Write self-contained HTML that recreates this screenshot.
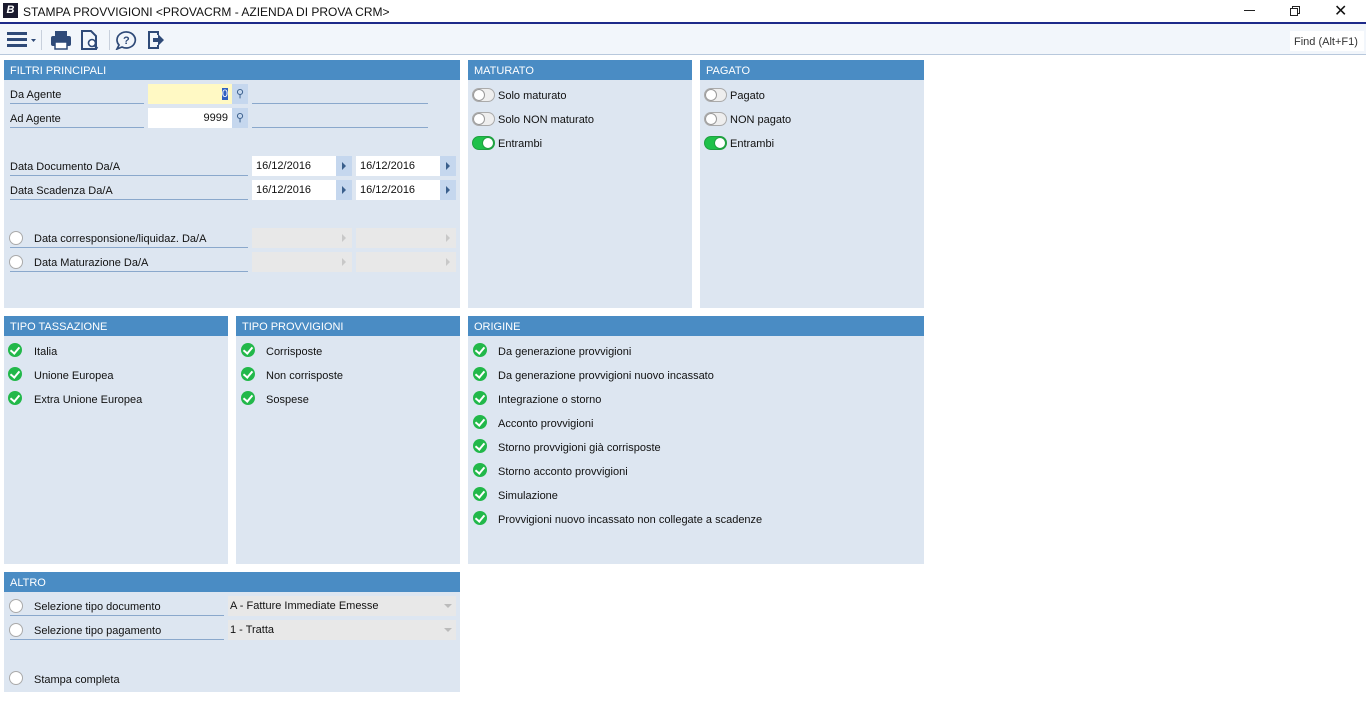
<!DOCTYPE html>
<html><head><meta charset="utf-8"><style>
*{margin:0;padding:0;box-sizing:border-box}
body{width:1366px;height:728px;background:#fff;font-family:"Liberation Sans",sans-serif;font-size:11px;color:#111;position:relative;overflow:hidden}
.a{position:absolute}
.p{position:absolute;background:#dde6f1}
.h{position:absolute;left:0;right:0;top:0;height:20px;background:#4a8cc4;color:#fff;font-size:11px;line-height:23px;padding-left:6px}
.lbl{position:absolute;border-bottom:1px solid #8aa8cc;height:20px;line-height:23px}
.in{position:absolute;background:#fff;height:20px;line-height:21px;padding-left:4px}
.btn{position:absolute;background:#c5d7ee;height:20px;width:16px}
.btn:after{content:"";position:absolute;left:6px;top:6px;border-left:4px solid #3a5f8c;border-top:4px solid transparent;border-bottom:4px solid transparent}
.dis{background:#e8e8e8}
.btn.dis:after{border-left-color:#c8c8c8}
.rad{position:absolute;width:14px;height:14px;border-radius:50%;background:#fff;border:1px solid #aaa}
.tg{position:absolute;width:23px;height:14px;border-radius:7px;background:#eee;border:1px solid #aaa}
.tg:after{content:"";position:absolute;left:0;top:0;width:12px;height:12px;border-radius:50%;background:#fff;border:1px solid #999;box-sizing:border-box}
.tg.on{background:#1fc14a;border-color:#1fa040}
.tg.on:after{left:9px;border-color:#1fa040}
.ck{position:absolute;width:14px;height:14px;border-radius:50%;background:#22b84a}
.ck:after{content:"";position:absolute;left:4px;top:2px;width:4px;height:7px;border:solid #fff;border-width:0 2px 2px 0;transform:rotate(40deg)}
.t{position:absolute;white-space:nowrap}
</style></head><body>
<div class="a" style="left:3px;top:3px;width:15px;height:15px;background:#1a1a2e;color:#fff;font-size:11px;font-style:italic;font-weight:bold;text-align:center;line-height:15px">B</div>
<div class="t" style="left:23px;top:5px;font-size:12px">STAMPA PROVVIGIONI &lt;PROVACRM - AZIENDA DI PROVA CRM&gt;</div>
<div class="a" style="left:1244px;top:10px;width:11px;height:1px;background:#222"></div>
<div class="a" style="left:1292px;top:6px;width:8px;height:8px;border:1px solid #222"></div>
<div class="a" style="left:1290px;top:8px;width:8px;height:8px;border:1px solid #222;background:#fff"></div>
<div class="t" style="left:1334px;top:1px;font-size:16px">✕</div>
<div class="a" style="left:0;top:22px;width:1366px;height:2px;background:#1d2a8a"></div>
<div class="a" style="left:0;top:24px;width:1366px;height:31px;background:#f2f6fb;border-bottom:1px solid #b8c8dc"></div>
<svg class="a" style="left:6px;top:30px" width="160" height="20">
<g fill="#2f4a78"><rect x="1" y="2" width="20" height="3"/><rect x="1" y="8" width="20" height="3"/><rect x="1" y="14" width="20" height="3"/><path d="M25 9h5l-2.5 3z"/></g>
<rect x="35" y="0" width="1" height="20" fill="#c8d0dc"/>
<g fill="#2f4a78"><rect x="49" y="1" width="12" height="5"/><rect x="45" y="6" width="20" height="10" rx="2"/><rect x="49" y="12" width="12" height="7" fill="#fff" stroke="#2f4a78" stroke-width="1.5"/></g>
<path d="M76 1h9l5 5v13h-14z" fill="none" stroke="#2f4a78" stroke-width="2"/>
<circle cx="86" cy="13" r="3.5" fill="#fff" stroke="#2f4a78" stroke-width="1.6"/><path d="M88.5 15.5l3 3" stroke="#2f4a78" stroke-width="2"/>
<rect x="103" y="0" width="1" height="20" fill="#c8d0dc"/>
<path d="M121 2a9 8 0 1 1-5 15l-5 2 2-4a9 8 0 0 1 8-13z" fill="none" stroke="#2f4a78" stroke-width="1.7"/>
<text x="117" y="14" font-size="11" font-weight="bold" fill="#2f4a78" font-family="Liberation Sans">?</text>
<path d="M152 5v-3h-9v16h9v-3" fill="none" stroke="#2f4a78" stroke-width="2"/><path d="M147 8h5v-4l6 6-6 6v-4h-5z" fill="#2f4a78"/>
</svg>
<div class="a" style="left:1290px;top:31px;width:74px;height:20px;background:#fff"></div>
<div class="t" style="left:1294px;top:36px;font-size:11px;color:#333">Find (Alt+F1)</div>

<div class="p" style="left:4px;top:60px;width:456px;height:248px"><div class="h">FILTRI PRINCIPALI</div></div>
<div class="lbl" style="left:10px;top:84px;width:134px">Da Agente</div>
<div class="in" style="left:148px;top:84px;width:84px;background:#fff9c4;text-align:right;padding-right:4px"><span style="background:#3060c0;color:#fff">0</span></div>
<div class="a" style="left:232px;top:84px;width:16px;height:20px;background:#c5d7ee;color:#3a5f8c;font-size:11px;text-align:center;line-height:20px">⚲</div>
<div class="a" style="left:252px;top:103px;width:176px;height:1px;background:#8aa8cc"></div>
<div class="lbl" style="left:10px;top:108px;width:134px">Ad Agente</div>
<div class="in" style="left:148px;top:108px;width:84px;text-align:right;padding-right:4px">9999</div>
<div class="a" style="left:232px;top:108px;width:16px;height:20px;background:#c5d7ee;color:#3a5f8c;font-size:11px;text-align:center;line-height:20px">⚲</div>
<div class="a" style="left:252px;top:127px;width:176px;height:1px;background:#8aa8cc"></div>

<div class="lbl" style="left:10px;top:156px;width:238px">Data Documento Da/A</div>
<div class="in" style="left:252px;top:156px;width:84px">16/12/2016</div><div class="btn" style="left:336px;top:156px"></div>
<div class="in" style="left:356px;top:156px;width:84px">16/12/2016</div><div class="btn" style="left:440px;top:156px"></div>
<div class="lbl" style="left:10px;top:180px;width:238px">Data Scadenza Da/A</div>
<div class="in" style="left:252px;top:180px;width:84px">16/12/2016</div><div class="btn" style="left:336px;top:180px"></div>
<div class="in" style="left:356px;top:180px;width:84px">16/12/2016</div><div class="btn" style="left:440px;top:180px"></div>

<div class="rad" style="left:9px;top:231px"></div>
<div class="lbl" style="left:10px;top:228px;width:238px;padding-left:24px">Data corresponsione/liquidaz. Da/A</div>
<div class="in dis" style="left:252px;top:228px;width:84px"></div><div class="btn dis" style="left:336px;top:228px"></div>
<div class="in dis" style="left:356px;top:228px;width:84px"></div><div class="btn dis" style="left:440px;top:228px"></div>
<div class="rad" style="left:9px;top:255px"></div>
<div class="lbl" style="left:10px;top:252px;width:238px;padding-left:24px">Data Maturazione Da/A</div>
<div class="in dis" style="left:252px;top:252px;width:84px"></div><div class="btn dis" style="left:336px;top:252px"></div>
<div class="in dis" style="left:356px;top:252px;width:84px"></div><div class="btn dis" style="left:440px;top:252px"></div>

<div class="p" style="left:468px;top:60px;width:224px;height:248px"><div class="h">MATURATO</div></div>
<div class="tg" style="left:472px;top:88px"></div><div class="t" style="left:498px;top:90px">Solo maturato</div>
<div class="tg" style="left:472px;top:112px"></div><div class="t" style="left:498px;top:114px">Solo NON maturato</div>
<div class="tg on" style="left:472px;top:136px"></div><div class="t" style="left:498px;top:138px">Entrambi</div>
<div class="p" style="left:700px;top:60px;width:224px;height:248px"><div class="h">PAGATO</div></div>
<div class="tg" style="left:704px;top:88px"></div><div class="t" style="left:730px;top:90px">Pagato</div>
<div class="tg" style="left:704px;top:112px"></div><div class="t" style="left:730px;top:114px">NON pagato</div>
<div class="tg on" style="left:704px;top:136px"></div><div class="t" style="left:730px;top:138px">Entrambi</div>

<div class="p" style="left:4px;top:316px;width:224px;height:248px"><div class="h">TIPO TASSAZIONE</div></div>
<div class="ck" style="left:8px;top:343px"></div><div class="t" style="left:34px;top:346px">Italia</div>
<div class="ck" style="left:8px;top:367px"></div><div class="t" style="left:34px;top:370px">Unione Europea</div>
<div class="ck" style="left:8px;top:391px"></div><div class="t" style="left:34px;top:394px">Extra Unione Europea</div>
<div class="p" style="left:236px;top:316px;width:224px;height:248px"><div class="h">TIPO PROVVIGIONI</div></div>
<div class="ck" style="left:241px;top:343px"></div><div class="t" style="left:266px;top:346px">Corrisposte</div>
<div class="ck" style="left:241px;top:367px"></div><div class="t" style="left:266px;top:370px">Non corrisposte</div>
<div class="ck" style="left:241px;top:391px"></div><div class="t" style="left:266px;top:394px">Sospese</div>
<div class="p" style="left:468px;top:316px;width:456px;height:248px"><div class="h">ORIGINE</div></div>
<div class="ck" style="left:473px;top:343px"></div><div class="t" style="left:498px;top:346px">Da generazione provvigioni</div>
<div class="ck" style="left:473px;top:367px"></div><div class="t" style="left:498px;top:370px">Da generazione provvigioni nuovo incassato</div>
<div class="ck" style="left:473px;top:391px"></div><div class="t" style="left:498px;top:394px">Integrazione o storno</div>
<div class="ck" style="left:473px;top:415px"></div><div class="t" style="left:498px;top:418px">Acconto provvigioni</div>
<div class="ck" style="left:473px;top:439px"></div><div class="t" style="left:498px;top:442px">Storno provvigioni già corrisposte</div>
<div class="ck" style="left:473px;top:463px"></div><div class="t" style="left:498px;top:466px">Storno acconto provvigioni</div>
<div class="ck" style="left:473px;top:487px"></div><div class="t" style="left:498px;top:490px">Simulazione</div>
<div class="ck" style="left:473px;top:511px"></div><div class="t" style="left:498px;top:514px">Provvigioni nuovo incassato non collegate a scadenze</div>

<div class="p" style="left:4px;top:572px;width:456px;height:120px"><div class="h">ALTRO</div></div>
<div class="rad" style="left:9px;top:599px"></div>
<div class="lbl" style="left:10px;top:596px;width:214px;padding-left:24px">Selezione tipo documento</div>
<div class="in" style="left:228px;top:596px;width:228px;background:#e8e8e8;padding-left:2px">A - Fatture Immediate Emesse</div>
<div class="a" style="left:444px;top:604px;border-top:4px solid #bbb;border-left:4px solid transparent;border-right:4px solid transparent"></div>
<div class="rad" style="left:9px;top:623px"></div>
<div class="lbl" style="left:10px;top:620px;width:214px;padding-left:24px">Selezione tipo pagamento</div>
<div class="in" style="left:228px;top:620px;width:228px;background:#e8e8e8;padding-left:2px">1 - Tratta</div>
<div class="a" style="left:444px;top:628px;border-top:4px solid #bbb;border-left:4px solid transparent;border-right:4px solid transparent"></div>
<div class="rad" style="left:9px;top:671px"></div>
<div class="t" style="left:34px;top:674px">Stampa completa</div>
</body></html>
